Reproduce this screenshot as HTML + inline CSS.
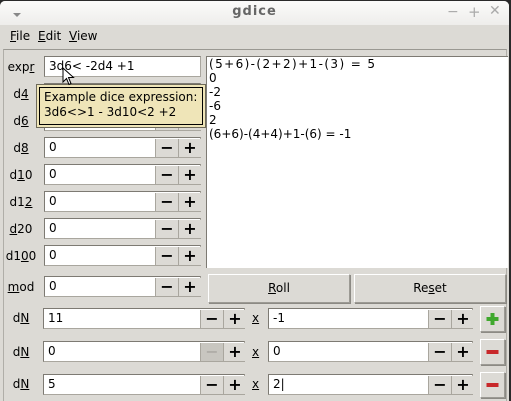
<!DOCTYPE html>
<html><head><style>
*{margin:0;padding:0;box-sizing:border-box}
body{width:511px;height:401px;background:#2a2a2a;position:relative;overflow:hidden;font-family:"DejaVu Sans","Liberation Sans",sans-serif;font-size:12px;color:#000}
.win{position:absolute;left:0;top:1px;width:509px;height:400px;background:#dcdad5;border-radius:5px 5px 0 0;overflow:hidden}
.title{position:absolute;left:0;top:0;width:509px;height:24px;background:linear-gradient(#fbfbfa,#eeedeb)}
.title .t{position:absolute;left:0;width:100%;top:3px;text-align:center;font-weight:bold;font-size:13px;color:#666;letter-spacing:1px}
.menu{position:absolute;left:3px;top:24px;width:504px;height:23px;background:#dcdad5}
.menu span{position:absolute;top:4px}
.frame{position:absolute;left:3px;top:48px;width:504px;height:352px;border-top:1px solid #9a9892;border-left:1px solid #b0aea8;border-right:1px solid #b0aea8}
.a{position:absolute}
.lbl{position:absolute;width:42px;text-align:center}
u{text-decoration:underline}
.e{position:absolute;background:#fff;border:1px solid #a9a69e;border-top-color:#7d7a73;border-left-color:#7d7a73;height:21px;padding:2px 0 0 4px}
.sb{position:absolute;top:1px;height:18px;width:23px;background:#dcdad5;border-left:1px solid #a9a69e;text-align:center;font-weight:bold;font-size:16px;line-height:17px}
.btn{position:absolute;background:#dcdad5;border:1px solid #9c9a94;border-top-color:#fff;border-left-color:#fff;box-shadow:1px 1px 0 #8c8a84;text-align:center}
</style></head><body>
<div class="win">
<div class="title"><div class="t">gdice</div>
<div class="a" style="left:13px;top:12px;width:0;height:0;border-left:4px solid transparent;border-right:4px solid transparent;border-top:4px solid #888"></div>
<div class="a" style="left:447px;top:3px;color:#aaa;font-size:14px">&minus;</div>
<div class="a" style="left:468px;top:2px;color:#aaa;font-size:15px">+</div>
<div class="a" style="left:489px;top:2px;color:#aaa;font-size:14px">✕</div>
</div>
<div class="menu"><span style="left:7px"><u>F</u>ile</span><span style="left:35px"><u>E</u>dit</span><span style="left:66px"><u>V</u>iew</span></div>
<div class="frame"></div>

<div class="lbl" style="left:0;top:59px">exp<u>r</u></div>
<div class="e" style="left:44px;top:55px;width:157px">3d6&lt; -2d4 +1</div>

<div class="lbl" style="left:0;top:86px">d<u>4</u></div>
<div class="e" style="left:44px;top:82px;width:157px">0<div class="sb" style="left:110px">−</div><div class="sb" style="left:133px">+</div></div>
<div class="lbl" style="left:0;top:113px">d<u>6</u></div>
<div class="e" style="left:44px;top:109px;width:157px">0<div class="sb" style="left:110px">−</div><div class="sb" style="left:133px">+</div></div>
<div class="lbl" style="left:0;top:140px">d<u>8</u></div>
<div class="e" style="left:44px;top:136px;width:157px">0<div class="sb" style="left:110px">−</div><div class="sb" style="left:133px">+</div></div>
<div class="lbl" style="left:0;top:167px">d<u>1</u>0</div>
<div class="e" style="left:44px;top:163px;width:157px">0<div class="sb" style="left:110px">−</div><div class="sb" style="left:133px">+</div></div>
<div class="lbl" style="left:0;top:194px">d1<u>2</u></div>
<div class="e" style="left:44px;top:190px;width:157px">0<div class="sb" style="left:110px">−</div><div class="sb" style="left:133px">+</div></div>
<div class="lbl" style="left:0;top:221px"><u>d</u>20</div>
<div class="e" style="left:44px;top:217px;width:157px">0<div class="sb" style="left:110px">−</div><div class="sb" style="left:133px">+</div></div>
<div class="lbl" style="left:0;top:248px">d1<u>0</u>0</div>
<div class="e" style="left:44px;top:244px;width:157px">0<div class="sb" style="left:110px">−</div><div class="sb" style="left:133px">+</div></div>
<div class="lbl" style="left:0;top:279px"><u>m</u>od</div>
<div class="e" style="left:44px;top:275px;width:157px">0<div class="sb" style="left:110px">−</div><div class="sb" style="left:133px">+</div></div>

<div class="a" style="left:206px;top:55px;width:302px;height:212px;background:#fff;border-left:1px solid #7d7a73;border-top:1px solid #7d7a73;padding:0 0 0 2px;line-height:14px"><span style="letter-spacing:1.4px">(5+6)-(2+2)+1-(3) = 5</span><br>0<br>-2<br>-6<br>2<br>(6+6)-(4+4)+1-(6) = -1</div>

<div class="btn" style="left:208px;top:273px;width:142px;height:29px;padding-top:6px"><u>R</u>oll</div>
<div class="btn" style="left:354px;top:273px;width:152px;height:29px;padding-top:6px">Re<u>s</u>et</div>

<div class="lbl" style="left:0;top:310px">d<u>N</u></div>
<div class="e" style="left:43px;top:307px;width:202px">11<div class="sb" style="left:156px">−</div><div class="sb" style="left:179px">+</div></div>
<div class="a" style="left:252px;top:310px"><u>x</u></div>
<div class="e" style="left:268px;top:307px;width:205px">-1<div class="sb" style="left:159px">−</div><div class="sb" style="left:182px">+</div></div>
<div class="btn" style="left:480px;top:305px;width:25px;height:26px"><svg width="23" height="24"><path d="M11.5 6v12M5.5 12h12" stroke="#3fa82d" stroke-width="4"/></svg></div>

<div class="lbl" style="left:0;top:344px">d<u>N</u></div>
<div class="e" style="left:43px;top:340px;width:202px">0<div class="sb" style="left:156px;color:#b0aea8;background:#c8c6c0">−</div><div class="sb" style="left:179px">+</div></div>
<div class="a" style="left:252px;top:344px"><u>x</u></div>
<div class="e" style="left:268px;top:340px;width:205px">0<div class="sb" style="left:159px">−</div><div class="sb" style="left:182px">+</div></div>
<div class="btn" style="left:480px;top:338px;width:25px;height:26px"><svg width="23" height="24"><path d="M5.5 12h12" stroke="#c8282a" stroke-width="4"/></svg></div>

<div class="lbl" style="left:0;top:376px">d<u>N</u></div>
<div class="e" style="left:43px;top:373px;width:202px">5<div class="sb" style="left:156px">−</div><div class="sb" style="left:179px">+</div></div>
<div class="a" style="left:252px;top:376px"><u>x</u></div>
<div class="e" style="left:268px;top:373px;width:205px">2|<div class="sb" style="left:159px">−</div><div class="sb" style="left:182px">+</div></div>
<div class="btn" style="left:480px;top:371px;width:25px;height:26px"><svg width="23" height="24"><path d="M5.5 12h12" stroke="#c8282a" stroke-width="4"/></svg></div>

<div class="a" style="left:36px;top:83px;width:170px;height:44px;background:#efe5b8;border:1px solid #6e6a5a;padding:2px">
<div style="border:1px solid #000;height:38px;padding:2px 0 0 4px;line-height:15px">Example dice expression:<br>3d6&lt;&gt;1 - 3d10&lt;2 +2</div></div>
<svg class="a" style="left:62px;top:66px" width="14" height="20"><path d="M1 1v14l3.5-3.5 2.5 6 2-1-2.5-6h5z" fill="#fff" stroke="#000"/></svg>
</div>
</body></html>
